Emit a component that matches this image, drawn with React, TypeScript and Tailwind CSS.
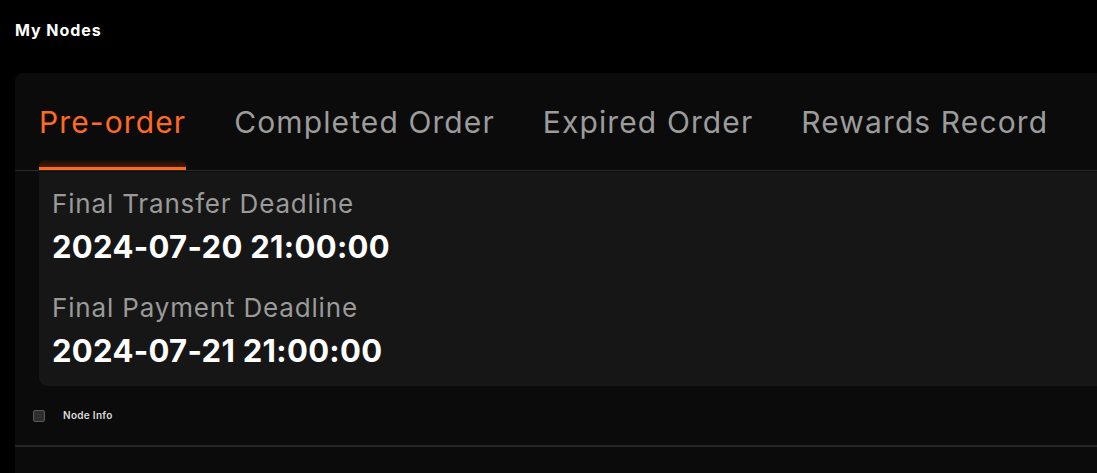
import React from "react";

const tabs = ["Pre-order", "Completed Order", "Expired Order", "Rewards Record"];

export default function App() {
  return (
    <div
      className="min-h-screen bg-black pl-[15px] pt-[18px] overflow-hidden"
      style={{ fontFamily: "Inter, 'Noto Sans', sans-serif" }}
    >
      <h1 className="text-[16px] leading-6 font-bold text-white tracking-[0.06em]">My Nodes</h1>
      <div className="mt-[31px] bg-[#0b0b0b] rounded-tl-lg min-h-[420px]">
        <div className="flex gap-12 pl-6 border-b border-[#2a2a2a]">
          {tabs.map((t, i) => (
            <div key={t} className="relative pt-[31px] pb-[30px]">
              <span
                className={
                  "text-[30px] leading-9 whitespace-nowrap tracking-[0.037em] " +
                  (i === 0 ? "text-[#ff6a21]" : "text-[#9c9c9c]")
                }
              >
                {t}
              </span>
              {i === 0 && (
                <>
                  <div className="absolute left-0 right-0 bottom-[2px] h-[8px] rounded-t-md bg-gradient-to-b from-[#1a0c06] to-[#4a1f0c]" />
                  <div className="absolute left-0 right-0 bottom-0 h-[3px] bg-[#ff6a21]" />
                </>
              )}
            </div>
          ))}
        </div>
        <div className="ml-6 mt-px bg-[#161616] rounded-bl-lg pt-4 pb-[17px] px-[13px]">
          <div>
            <div className="text-[26px] leading-8 text-[#9a9a9a] tracking-[0.032em]">Final Transfer Deadline</div>
            <div className="mt-[9px] text-[31px] leading-9 font-bold text-white tracking-[0.01em]">2024-07-20 21:00:00</div>
          </div>
          <div className="mt-[27px]">
            <div className="text-[26px] leading-8 text-[#9a9a9a] tracking-[0.032em]">Final Payment Deadline</div>
            <div className="mt-[9px] text-[31px] leading-9 font-bold text-white tracking-[0.01em]">2024-07-21 21:00:00</div>
          </div>
        </div>
        <div className="flex items-center h-[61px] pl-[18px] border-b-2 border-[#262626]">
          <div className="w-3 h-3 rounded-[2px] border border-[#5a5a5a] bg-[#2e2e2e]" />
          <span className="ml-[18px] text-[10px] font-semibold text-[#dcdcdc] tracking-[0.03em]">Node Info</span>
        </div>
      </div>
    </div>
  );
}
